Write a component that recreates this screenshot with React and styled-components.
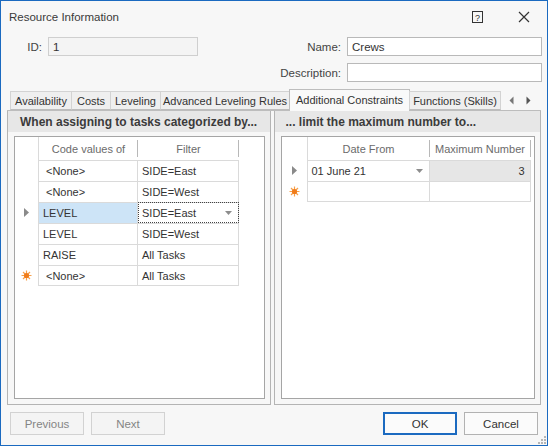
import React from 'react';
import styled, { createGlobalStyle } from 'styled-components';

const GlobalStyle = createGlobalStyle`
  html, body {
    margin: 0;
    padding: 0;
    background: #ffffff;
  }
  * {
    box-sizing: border-box;
  }
`;

const Window = styled.div`
  width: 548px;
  height: 446px;
  border: 1px solid #1b6ac0;
  background: #f7f7f7;
  display: flex;
  flex-direction: column;
  font-family: 'Liberation Sans', Arial, sans-serif;
  font-size: 11px;
  color: #333;
  position: relative;
`;

const TitleBar = styled.div`
  height: 31px;
  display: flex;
  align-items: center;
  padding: 0 3px 0 8px;
  flex-shrink: 0;
  font-size: 11.5px;
`;

const Title = styled.div`
  flex: 1;
  color: #3a3a3a;
`;

const TitleButton = styled.div`
  width: 40px;
  height: 31px;
  display: flex;
  align-items: center;
  justify-content: center;
  margin-left: ${(p) => p.$gap || 0}px;
`;

const Form = styled.div`
  padding-top: 5px;
  display: flex;
  flex-direction: column;
  gap: 7px;
  flex-shrink: 0;
  font-size: 11.5px;
`;

const FormRow = styled.div`
  display: flex;
  align-items: center;
  height: 19px;
  padding-right: 5px;
`;

const Label = styled.div`
  width: ${(p) => p.$width}px;
  text-align: right;
  padding-right: 6px;
  color: #444;
  white-space: nowrap;
`;

const Input = styled.div`
  width: ${(p) => p.$width}px;
  height: 19px;
  border: 1px solid ${(p) => (p.$disabled ? '#cfcfcf' : '#b9b9b9')};
  background: ${(p) => (p.$disabled ? '#f4f4f4' : '#fff')};
  padding: 0 4px;
  display: flex;
  align-items: center;
  color: #333;
`;

const Spacer = styled.div`
  flex: 1;
`;

const TabStrip = styled.div`
  margin-top: 7px;
  height: 21px;
  display: flex;
  align-items: flex-end;
  padding-left: 9px;
  flex-shrink: 0;
  position: relative;
  z-index: 1;
`;

const Tab = styled.div`
  width: ${(p) => p.$width}px;
  height: ${(p) => (p.$active ? 22 : 19)}px;
  margin-left: -1px;
  margin-bottom: ${(p) => (p.$active ? -1 : 0)}px;
  border: 1px solid ${(p) => (p.$active ? '#bdbdbd' : '#d3d3d3')};
  border-bottom: ${(p) => (p.$active ? 'none' : '1px solid #bdbdbd')};
  background: ${(p) => (p.$active ? '#f9f9f9' : '#efefef')};
  display: flex;
  align-items: center;
  justify-content: center;
  white-space: nowrap;
  color: #333;
  padding-bottom: ${(p) => (p.$active ? 2 : 0)}px;
  &:first-child {
    margin-left: 0;
  }
`;

const TabArrows = styled.div`
  display: flex;
  gap: 12px;
  align-items: center;
  height: 19px;
  margin-left: 8px;
`;

const Page = styled.div`
  flex: 1;
  display: flex;
  gap: 3px;
  margin: 0 6px 0 6px;
  border-top: 1px solid #bdbdbd;
`;

const Group = styled.div`
  width: ${(p) => p.$width}px;
  border: 1px solid #b4b4b4;
  border-top: none;
  background: #f7f7f7;
  display: flex;
  flex-direction: column;
  padding: 0 5px 5px 6px;
`;

const GroupHeader = styled.div`
  height: 21px;
  margin: 0 -5px 4px -6px;
  background: #e7e7e7;
  display: flex;
  align-items: center;
  padding-left: ${(p) => p.$pad}px;
  font-size: 12px;
  font-weight: bold;
  color: #3b3b3b;
  white-space: nowrap;
`;

const Grid = styled.div`
  flex: 1;
  border: 1px solid #a5a5a5;
  background: #fff;
  display: grid;
  grid-template-columns: ${(p) => p.$cols};
  grid-auto-rows: 21px;
  grid-template-rows: 23px;
  align-content: start;
`;

const HeadCell = styled.div`
  display: flex;
  align-items: center;
  justify-content: center;
  color: #6b6b6b;
  position: relative;
  white-space: nowrap;
  border-left: ${(p) => (p.$left ? '1px solid #dadada' : 'none')};
  &::after {
    content: '';
    display: ${(p) => (p.$sep ? 'block' : 'none')};
    position: absolute;
    right: 0;
    top: 3px;
    bottom: 3px;
    width: 1px;
    background: #b8b8b8;
  }
`;

const Indicator = styled.div`
  display: flex;
  align-items: center;
  justify-content: center;
`;

const Cell = styled.div`
  display: flex;
  align-items: center;
  justify-content: ${(p) => (p.$right ? 'flex-end' : 'space-between')};
  padding: 0 ${(p) => (p.$right ? 5 : 6)}px 0 ${(p) => (p.$indent ? 7 : 4)}px;
  border-right: 1px solid #dadada;
  border-top: 1px solid #dadada;
  border-left: ${(p) => (p.$left ? '1px solid #dadada' : 'none')};
  border-bottom: ${(p) => (p.$last ? '1px solid #dadada' : 'none')};
  background: ${(p) => p.$bg || '#fff'};
  outline: ${(p) => (p.$focus ? '1px dotted #444' : 'none')};
  outline-offset: -1px;
  color: #333;
  white-space: nowrap;
`;

const Empty = styled.div``;

const Footer = styled.div`
  height: 40px;
  flex-shrink: 0;
  display: flex;
  align-items: flex-start;
  padding: 7px 9px 0 9px;
  gap: 7px;
  position: relative;
  font-size: 11.5px;
`;

const Button = styled.div`
  width: 74px;
  height: 23px;
  border: ${(p) => (p.$primary ? '2px solid #1b6ac0' : `1px solid ${p.$disabled ? '#d2d2d2' : '#b2b2b2'}`)};
  background: ${(p) => (p.$disabled ? '#f4f4f4' : '#fbfbfb')};
  color: ${(p) => (p.$disabled ? '#858585' : '#333')};
  display: flex;
  align-items: center;
  justify-content: center;
`;

const Grip = styled.svg`
  position: absolute;
  right: 1px;
  bottom: 1px;
`;

const HelpIcon = () => (
  <svg width="11" height="12" viewBox="0 0 11 12">
    <rect x="0.5" y="0.5" width="10" height="11" fill="none" stroke="#333" />
    <text x="5.5" y="9.5" fontSize="9" textAnchor="middle" fill="#333" fontFamily="Liberation Sans, sans-serif">?</text>
  </svg>
);

const CloseIcon = () => (
  <svg width="12" height="12" viewBox="0 0 12 12">
    <path d="M1 1 L11 11 M11 1 L1 11" stroke="#333" strokeWidth="1.2" />
  </svg>
);

const ArrowLeft = () => (
  <svg width="5" height="9" viewBox="0 0 5 9">
    <path d="M4.5 0.5 L0.5 4.5 L4.5 8.5 Z" fill="#777" />
  </svg>
);

const ArrowRight = () => (
  <svg width="5" height="9" viewBox="0 0 5 9">
    <path d="M0.5 0.5 L4.5 4.5 L0.5 8.5 Z" fill="#555" />
  </svg>
);

const RowPointer = () => (
  <svg width="5" height="9" viewBox="0 0 5 9">
    <path d="M0 0 L5 4.5 L0 9 Z" fill="#8a8a8a" />
  </svg>
);

const NewRowStar = () => (
  <svg width="11" height="11" viewBox="0 0 11 11">
    <g stroke="#f7a04b" strokeWidth="1.2">
      <path d="M5.5 0.5 V10.5 M0.5 5.5 H10.5 M2 2 L9 9 M9 2 L2 9" />
    </g>
    <circle cx="5.5" cy="5.5" r="2.6" fill="#f07c1a" />
  </svg>
);

const DropArrow = () => (
  <svg width="7" height="4" viewBox="0 0 7 4">
    <path d="M0 0 H7 L3.5 4 Z" fill="#8d8d8d" />
  </svg>
);

const leftRows = [
  { code: '<None>', indent: true, filter: 'SIDE=East' },
  { code: '<None>', indent: true, filter: 'SIDE=West' },
  { code: 'LEVEL', filter: 'SIDE=East', current: true },
  { code: 'LEVEL', filter: 'SIDE=West' },
  { code: 'RAISE', filter: 'All Tasks' },
  { code: '<None>', indent: true, filter: 'All Tasks', isNew: true },
];

const tabs = [
  { label: 'Availability', width: 62 },
  { label: 'Costs', width: 40 },
  { label: 'Leveling', width: 51 },
  { label: 'Advanced Leveling Rules', width: 130 },
  { label: 'Additional Constraints', width: 121, active: true },
  { label: 'Functions (Skills)', width: 92 },
];

const App = () => {
  return (
    <>
      <GlobalStyle />
      <Window>
        <TitleBar>
          <Title>Resource Information</Title>
          <TitleButton>
            <HelpIcon />
          </TitleButton>
          <TitleButton $gap={7}>
            <CloseIcon />
          </TitleButton>
        </TitleBar>

        <Form>
          <FormRow>
            <Label $width={47}>ID:</Label>
            <Input $width={150} $disabled>1</Input>
            <Spacer />
            <Label $width={80}>Name:</Label>
            <Input $width={195}>Crews</Input>
          </FormRow>
          <FormRow>
            <Spacer />
            <Label $width={80}>Description:</Label>
            <Input $width={195} />
          </FormRow>
        </Form>

        <TabStrip>
          {tabs.map((t) => (
            <Tab key={t.label} $width={t.width} $active={t.active}>
              {t.label}
            </Tab>
          ))}
          <TabArrows>
            <ArrowLeft />
            <ArrowRight />
          </TabArrows>
        </TabStrip>

        <Page>
          <Group $width={264}>
            <GroupHeader $pad={12}>When assigning to tasks categorized by...</GroupHeader>
            <Grid $cols="23px 100px 101px 1fr">
              <HeadCell />
              <HeadCell $sep $left>Code values of</HeadCell>
              <HeadCell $sep>Filter</HeadCell>
              <HeadCell />
              {leftRows.map((r, i) => (
                <React.Fragment key={i}>
                  <Indicator>
                    {r.current && <RowPointer />}
                    {r.isNew && <NewRowStar />}
                  </Indicator>
                  <Cell
                    $left
                    $indent={r.indent}
                    $last={i === leftRows.length - 1}
                    $bg={r.current ? '#cde4f7' : undefined}
                  >
                    {r.code}
                  </Cell>
                  <Cell $focus={r.current} $last={i === leftRows.length - 1}>
                    {r.filter}
                    {r.current && <DropArrow />}
                  </Cell>
                  <Empty />
                </React.Fragment>
              ))}
            </Grid>
          </Group>

          <Group $width={268}>
            <GroupHeader $pad={11}>... limit the maximum number to...</GroupHeader>
            <Grid $cols="25px 123px 101px 1fr">
              <HeadCell />
              <HeadCell $sep $left>Date From</HeadCell>
              <HeadCell $sep>Maximum Number</HeadCell>
              <HeadCell />
              <Indicator>
                <RowPointer />
              </Indicator>
              <Cell $left>
                01 June 21
                <DropArrow />
              </Cell>
              <Cell $right $bg="#e6e6e6">3</Cell>
              <Empty />
              <Indicator>
                <NewRowStar />
              </Indicator>
              <Cell $left $last />
              <Cell $last />
              <Empty />
            </Grid>
          </Group>
        </Page>

        <Footer>
          <Button $disabled>Previous</Button>
          <Button $disabled>Next</Button>
          <Spacer />
          <Button $primary>OK</Button>
          <Button>Cancel</Button>
          <Grip width="8" height="8" viewBox="0 0 8 8">
            <g fill="#b5b5b5">
              <rect x="6" y="0" width="2" height="2" />
              <rect x="3" y="3" width="2" height="2" />
              <rect x="6" y="3" width="2" height="2" />
              <rect x="0" y="6" width="2" height="2" />
              <rect x="3" y="6" width="2" height="2" />
              <rect x="6" y="6" width="2" height="2" />
            </g>
          </Grip>
        </Footer>
      </Window>
    </>
  );
};

export default App;
